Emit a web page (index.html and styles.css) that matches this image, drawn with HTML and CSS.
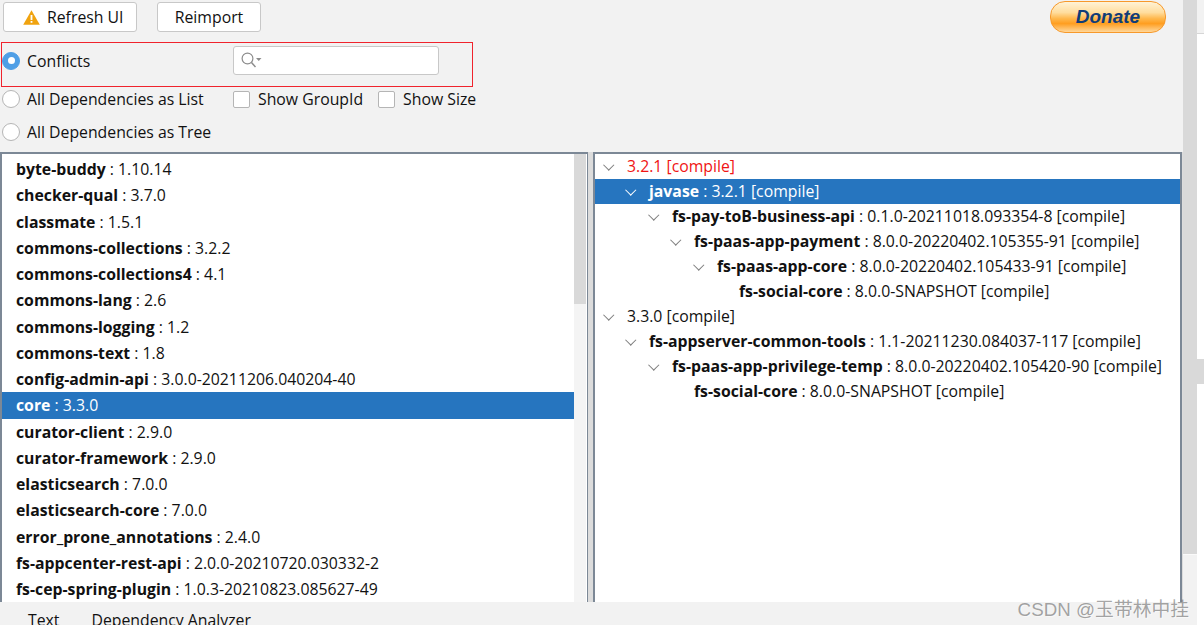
FILE: index.html
```html
<!DOCTYPE html>
<html lang="en">
<head>
    <meta charset="UTF-8">
    <title>Dependency Analyzer</title>
    <link rel="stylesheet" href="styles.css">
</head>
<body>
    <div class="app">
        <div class="main">
            <div class="toolbar">
                <div class="toolbar-buttons">
                    <button type="button" class="btn btn-refresh">
                        <svg class="warn-icon" width="17" height="15" viewBox="0 0 17 15"><path d="M8.5 0.3 L16.8 14.7 H0.2 Z" fill="#f0a30f"/><rect x="7.6" y="5" width="1.8" height="5" fill="#fff"/><rect x="7.6" y="11" width="1.8" height="1.8" fill="#fff"/></svg>
                        Refresh UI
                    </button>
                    <button type="button" class="btn btn-reimport">Reimport</button>
                </div>
                <div class="donate">Donate</div>
            </div>

            <div class="conflicts-box">
                <label class="radio-label"><span class="radio radio-on"></span>Conflicts</label>
                <div class="search">
                    <svg width="24" height="17" viewBox="0 0 24 17"><circle cx="6.5" cy="6.5" r="5.4" fill="none" stroke="#8c8c8c" stroke-width="1.2"/><path d="M10.5 10.5 L14.5 15" stroke="#8c8c8c" stroke-width="1.5"/><path d="M15 6 H20.5 L17.75 9 Z" fill="#8c8c8c"/></svg>
                </div>
            </div>

            <div class="option-row option-list">
                <label class="radio-label radio-wide"><span class="radio"></span>All Dependencies as List</label>
                <label class="check-label check-groupid"><span class="check"></span>Show GroupId</label>
                <label class="check-label"><span class="check"></span>Show Size</label>
            </div>
            <div class="option-row option-tree">
                <label class="radio-label"><span class="radio"></span>All Dependencies as Tree</label>
            </div>

            <div class="panels">
                <div class="panel panel-left">
                    <div class="list">
                        <div class="list-row"><b>byte-buddy</b> : 1.10.14</div>
                        <div class="list-row"><b>checker-qual</b> : 3.7.0</div>
                        <div class="list-row"><b>classmate</b> : 1.5.1</div>
                        <div class="list-row"><b>commons-collections</b> : 3.2.2</div>
                        <div class="list-row"><b>commons-collections4</b> : 4.1</div>
                        <div class="list-row"><b>commons-lang</b> : 2.6</div>
                        <div class="list-row"><b>commons-logging</b> : 1.2</div>
                        <div class="list-row"><b>commons-text</b> : 1.8</div>
                        <div class="list-row"><b>config-admin-api</b> : 3.0.0-20211206.040204-40</div>
                        <div class="list-row selected"><b>core</b> : 3.3.0</div>
                        <div class="list-row"><b>curator-client</b> : 2.9.0</div>
                        <div class="list-row"><b>curator-framework</b> : 2.9.0</div>
                        <div class="list-row"><b>elasticsearch</b> : 7.0.0</div>
                        <div class="list-row"><b>elasticsearch-core</b> : 7.0.0</div>
                        <div class="list-row"><b>error_prone_annotations</b> : 2.4.0</div>
                        <div class="list-row"><b>fs-appcenter-rest-api</b> : 2.0.0-20210720.030332-2</div>
                        <div class="list-row"><b>fs-cep-spring-plugin</b> : 1.0.3-20210823.085627-49</div>
                    </div>
                    <div class="scrollbar"><div class="thumb"></div></div>
                </div>
                <div class="panel panel-right">
                    <div class="tree">
                        <div class="tree-row lvl0 red"><span class="arrow"></span>3.2.1 [compile]</div>
                        <div class="tree-row lvl1 selected"><span class="arrow"></span><span><b>javase</b> : 3.2.1 [compile]</span></div>
                        <div class="tree-row lvl2"><span class="arrow"></span><span><b>fs-pay-toB-business-api</b> : 0.1.0-20211018.093354-8 [compile]</span></div>
                        <div class="tree-row lvl3"><span class="arrow"></span><span><b>fs-paas-app-payment</b> : 8.0.0-20220402.105355-91 [compile]</span></div>
                        <div class="tree-row lvl4"><span class="arrow"></span><span><b>fs-paas-app-core</b> : 8.0.0-20220402.105433-91 [compile]</span></div>
                        <div class="tree-row lvl5"><span class="arrow arrow-none"></span><span><b>fs-social-core</b> : 8.0.0-SNAPSHOT [compile]</span></div>
                        <div class="tree-row lvl0"><span class="arrow"></span>3.3.0 [compile]</div>
                        <div class="tree-row lvl1"><span class="arrow"></span><span><b>fs-appserver-common-tools</b> : 1.1-20211230.084037-117 [compile]</span></div>
                        <div class="tree-row lvl2"><span class="arrow"></span><span><b>fs-paas-app-privilege-temp</b> : 8.0.0-20220402.105420-90 [compile]</span></div>
                        <div class="tree-row lvl3"><span class="arrow arrow-none"></span><span><b>fs-social-core</b> : 8.0.0-SNAPSHOT [compile]</span></div>
                    </div>
                </div>
            </div>

            <div class="tabs">
                <span class="tab">Text</span>
                <span class="tab">Dependency Analyzer</span>
            </div>
        </div>
        <div class="outer-scroll"><div class="outer-thumb"></div></div>
        <div class="edge-strip">
            <div class="edge-top"></div>
            <div class="edge-mark"></div>
        </div>
    </div>
    <div class="watermark">CSDN @玉带林中挂</div>
</body>
</html>
```

FILE: styles.css
```css
html, body {
    margin: 0;
    height: 625px;
    overflow: hidden;
}
body {
    font-family: "Open Sans", "Noto Sans CJK SC", sans-serif;
    font-size: 15.8px;
    color: #111;
    background: #f2f2f2;
    position: relative;
}
.app {
    display: flex;
    height: 625px;
}
.main {
    width: 1183px;
    display: flex;
    flex-direction: column;
}
.toolbar {
    display: flex;
    justify-content: space-between;
    height: 42px;
    padding-left: 3px;
    padding-right: 17px;
    box-sizing: border-box;
}
.toolbar-buttons {
    display: flex;
    gap: 20px;
    padding-top: 2px;
}
.btn {
    height: 30px;
    font: inherit;
    color: inherit;
    background: #fff;
    border: 1px solid #c8c8c8;
    border-radius: 3px;
    display: flex;
    align-items: center;
    justify-content: center;
    padding: 0;
}
.btn-refresh {
    width: 134px;
    justify-content: flex-start;
    padding-left: 19px;
}
.btn-reimport {
    width: 104px;
}
.warn-icon {
    margin-right: 7px;
}
.donate {
    width: 116px;
    height: 32px;
    margin-top: 1px;
    box-sizing: border-box;
    border: 1px solid #f7992b;
    border-radius: 15px;
    background: linear-gradient(#fff3d6 0%, #ffdd9e 35%, #ffb84d 55%, #ff9e20 72%, #ffd79a 100%);
    color: #0f3c78;
    font-family: "Liberation Sans", sans-serif;
    font-style: italic;
    font-weight: bold;
    font-size: 19px;
    text-align: center;
    line-height: 29px;
}
.conflicts-box {
    width: 472px;
    height: 45px;
    margin-left: 1px;
    box-sizing: border-box;
    border: 1px solid #f0232d;
    display: flex;
    align-items: center;
    justify-content: space-between;
    padding-right: 33px;
    padding-bottom: 8px;
}
.radio-label, .check-label {
    display: flex;
    align-items: center;
}
.radio {
    width: 18px;
    height: 18px;
    margin-right: 7px;
    border: 1px solid #b5b5b5;
    border-radius: 50%;
    background: #fff;
    flex: none;
    box-sizing: border-box;
}
.radio-on {
    background: #4f9fe6;
    border-color: #4f9fe6;
    display: flex;
    align-items: center;
    justify-content: center;
}
.radio-on::after {
    content: "";
    width: 7px;
    height: 7px;
    border-radius: 50%;
    background: #fff;
}
.search {
    width: 206px;
    height: 29px;
    box-sizing: border-box;
    border: 1px solid #c8c8c8;
    border-radius: 3px;
    background: #fff;
    display: flex;
    align-items: center;
    padding-left: 7px;
}
.option-row {
    display: flex;
    align-items: center;
    padding-left: 2px;
}
.option-list {
    height: 24px;
}
.option-tree {
    height: 41px;
    padding-top: 1px;
    box-sizing: border-box;
}
.radio-wide {
    width: 231px;
}
.check-groupid {
    margin-right: 15px;
}
.check {
    width: 17px;
    height: 17px;
    margin-right: 8px;
    box-sizing: border-box;
    border: 1px solid #b5b5b5;
    border-radius: 2px;
    background: #fff;
}
.panels {
    display: flex;
    height: 450px;
    background: #dcdcdc;
}
.panel {
    box-sizing: border-box;
    background: #fff;
    border: 2px solid #7c8896;
    border-bottom: 0;
    overflow: hidden;
}
.panel-left {
    width: 588px;
    flex: none;
    display: flex;
    border-right-width: 1px;
}
.panel-right {
    flex: 1;
    margin-left: 5px;
    margin-right: 1px;
}
.list {
    width: 572px;
    padding-top: 2px;
}
.list-row {
    height: 26.25px;
    line-height: 26px;
    padding-left: 14px;
    white-space: nowrap;
}
.selected {
    background: #2675bf;
    color: #fff;
}
.scrollbar {
    flex: 1;
    background: #f4f4f4;
    border-right: 1px solid #fff;
}
.thumb {
    height: 150px;
    background: #d9d9d9;
}
.tree-row {
    display: flex;
    align-items: center;
    height: 25px;
    padding-bottom: 2px;
    box-sizing: border-box;
    white-space: nowrap;
}
.red {
    color: #f01414;
}
.arrow {
    width: 8px;
    height: 8px;
    margin-left: 9px;
    margin-right: 15px;
    flex: none;
    position: relative;
}
.arrow::before {
    content: "";
    position: absolute;
    left: 1px;
    top: -1px;
    width: 6.5px;
    height: 6.5px;
    border-right: 1.6px solid #7d7d7d;
    border-bottom: 1.6px solid #7d7d7d;
    transform: rotate(45deg);
}
.selected .arrow::before {
    border-color: #fff;
}
.arrow-none::before {
    display: none;
}
.lvl1 { padding-left: 22px; }
.lvl2 { padding-left: 45px; }
.lvl3 { padding-left: 67px; }
.lvl4 { padding-left: 90px; }
.lvl5 { padding-left: 112px; }
.tabs {
    flex: 1;
    display: flex;
    gap: 32px;
    padding-left: 28px;
    padding-top: 7px;
    overflow: hidden;
}
.outer-scroll {
    width: 14px;
    background: #f2f2f2;
}
.outer-thumb {
    height: 554px;
    background: #d9d9d9;
    border-bottom: 1px solid #fafafa;
}
.edge-strip {
    flex: 1;
    background: #fff;
}
.edge-top {
    height: 33px;
    background: #f2f2f2;
    border-bottom: 1px solid #d6d6d6;
    margin-bottom: 325px;
}
.edge-mark {
    height: 25px;
    background: #d9d9d9;
}
.watermark {
    position: absolute;
    right: 15px;
    top: 594px;
    font-size: 18.8px;
    color: rgba(90, 90, 90, 0.55);
    text-shadow: 1px 1px 0 rgba(255, 255, 255, 0.5);
    font-family: "Liberation Sans", "Noto Sans CJK SC", sans-serif;
}
```
